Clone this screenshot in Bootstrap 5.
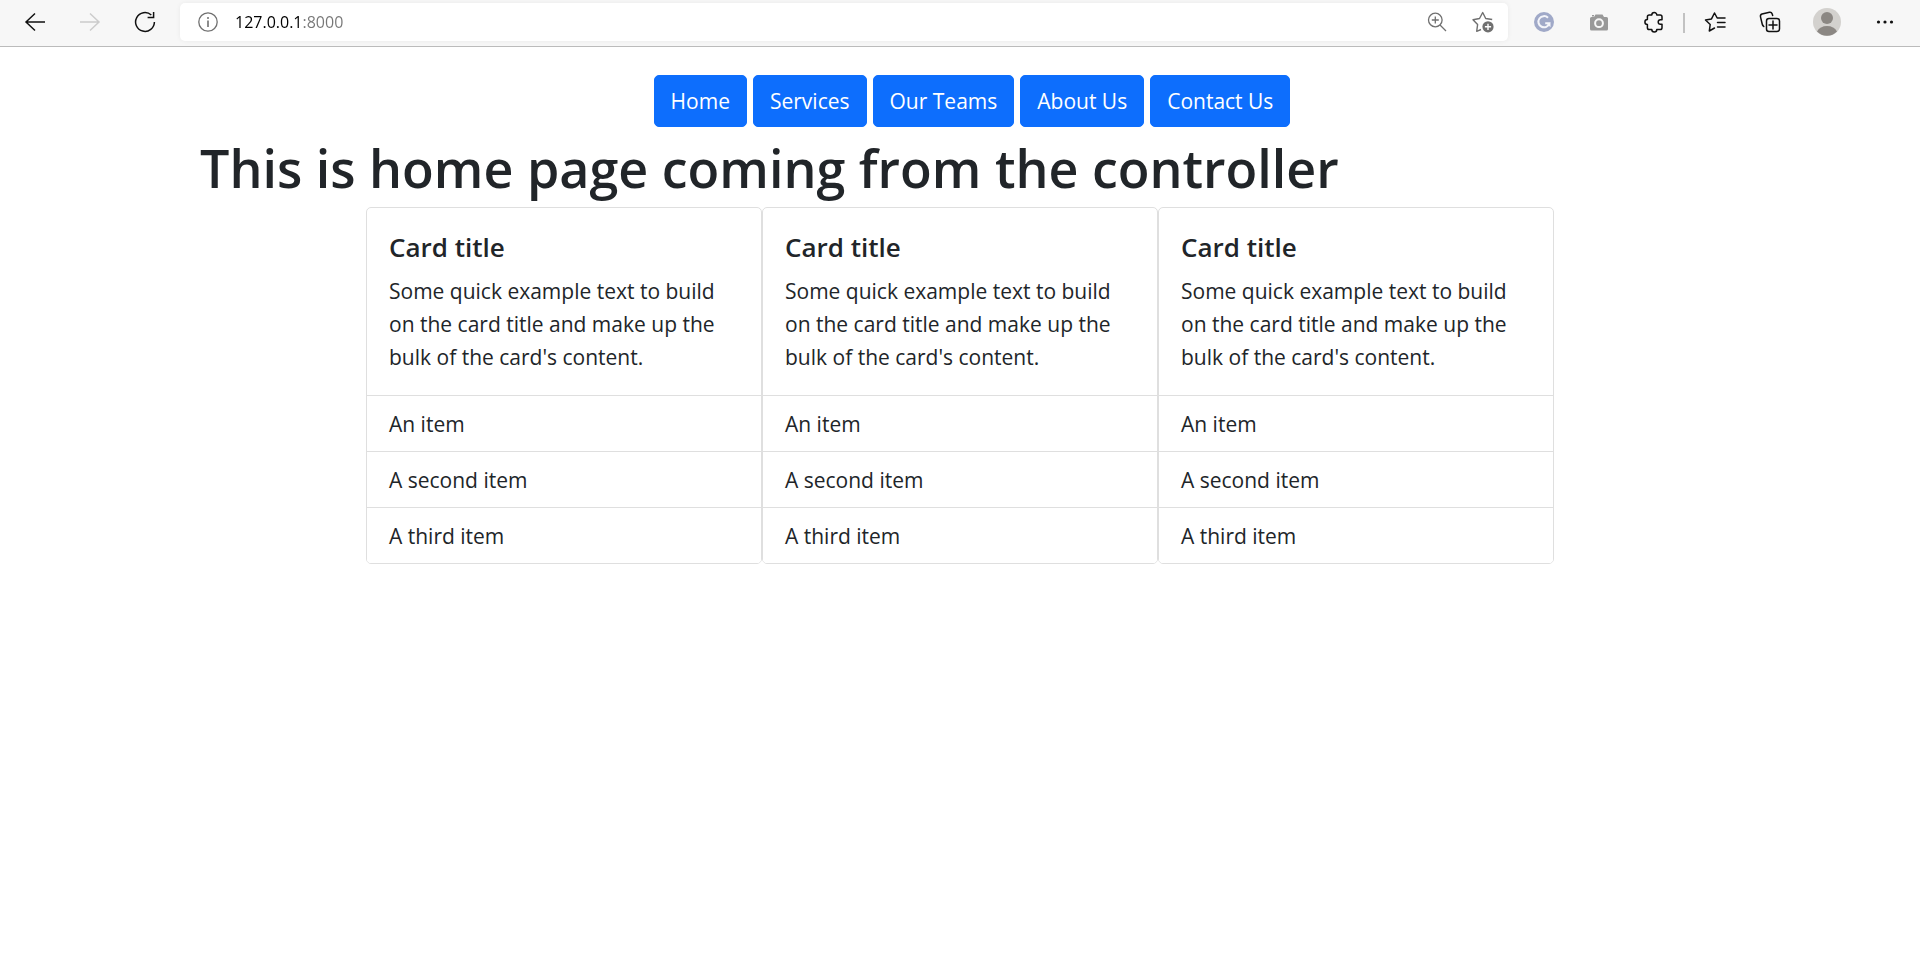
<!DOCTYPE html>
<html lang="en">
<head>
<meta charset="utf-8">
<meta name="viewport" content="width=device-width, initial-scale=1">
<title>Home</title>
<link href="https://cdn.jsdelivr.net/npm/bootstrap@5.3.0/dist/css/bootstrap.min.css" rel="stylesheet">
<style>
  body { font-family: "Open Sans", "Noto Sans", sans-serif; font-size: 21px; line-height: 33px; color: #212529; }

  /* Browser toolbar */
  .toolbar { height: 47px; padding: 0 8px 0 7px; background: #f7f7f7; border-bottom: 1px solid #bbb; }
  .tool { width: 55px; height: 44px; padding: 0; border: 0; background: none; color: #111; display: flex; align-items: center; justify-content: center; }
  .tool.wide { width: 60px; }
  .tool:disabled { color: #ccc; }
  .tool svg, .address svg { display: block; flex: none; }
  .address { height: 38px; margin: 3px 8px 0; padding: 0 2px 0 18px; background: #fff; border-radius: 5px; box-shadow: 0 0 5px #0000000f; color: #707070; }
  .address input { min-width: 0; height: 36px; margin-left: 17px; padding: 0; border: 0; outline: 0; font-size: 16px; line-height: 20px; color: #000;
    background: linear-gradient(90deg, #000 68px, #767676 68px) text; -webkit-background-clip: text; background-clip: text; -webkit-text-fill-color: transparent; }
  .address button { width: 46px; height: 36px; padding: 0; border: 0; background: none; color: #707070; display: flex; align-items: center; justify-content: center; }
  .divider { width: 2px; height: 20px; margin: 0 2px; background: #c2c2c2; }

  /* Page */
  .site-nav { gap: 6px; padding: 28px 0 0 24px; }
  .site-nav .btn { --bs-btn-font-size: 21px; --bs-btn-line-height: 34px; --bs-btn-padding-x: 16px; --bs-btn-padding-y: 8px; --bs-btn-border-radius: 5px; --bs-btn-bg: #0d6efd; }
  .page-body { max-width: 1520px; }
  .page-title { margin: 8px 0 6px; font-size: 52px; font-weight: 600; line-height: 66px; }
  .card { --bs-card-border-color: #dfdfdf; --bs-card-border-radius: 5px; --bs-card-inner-border-radius: 4px; width: 396px; }
  .card-body { padding: 23px 22px 21px; }
  .card-title { margin-bottom: 11px; font-size: 26px; font-weight: 600; line-height: 33px; }
  .card .list-group { --bs-list-group-border-color: #dfdfdf; --bs-list-group-color: #212529; }
  .card .list-group-item { padding: 12px 22px 10px; }
</style>
</head>
<body>
<header class="toolbar d-flex align-items-start">
  <button class="tool" type="button" aria-label="Back"><svg width="22" height="22" viewBox="0 0 22 22" fill="none" stroke="currentColor" stroke-width="1.5"><path d="M11 2.500 2 11l9 8.500M2 11h19"/></svg></button>
  <button class="tool" type="button" aria-label="Forward" disabled><svg width="22" height="22" viewBox="0 0 22 22" fill="none" stroke="currentColor" stroke-width="1.500"><path d="m11 2.500 9 8.500-9 8.500M20 11H1"/></svg></button>
  <button class="tool" type="button" aria-label="Refresh"><svg width="22" height="22" viewBox="0 0 22 22" fill="none" stroke="currentColor" stroke-width="1.500"><path d="M17.300 4A9.400 9.400 0 1 0 20.400 11M19.600 1v5.600h-6"/></svg></button>
  <form class="address flex-fill d-flex align-items-center">
    <svg width="20" height="20" viewBox="0 0 20 20" fill="none" stroke="currentColor" stroke-width="1.300"><circle cx="10" cy="10" r="9.200"/><path d="M10 8.500V15" stroke-width="1.600"/><circle cx="10" cy="6" r="1" fill="currentColor" stroke="none"/></svg>
    <input class="flex-fill" type="text" value="127.0.0.1:8000" aria-label="Address">
    <button type="button" aria-label="Zoom"><svg width="20" height="20" viewBox="0 0 20 20" fill="none" stroke="currentColor" stroke-width="1.300"><circle cx="8.300" cy="8" r="6.800"/><path d="m13 13 6 6M8.300 4.500v7M4.800 8h7"/></svg></button>
    <button type="button" aria-label="Add to favorites"><svg width="22" height="22" viewBox="0 0 22 22" fill="none" stroke="currentColor" stroke-width="1.400" stroke-linejoin="round"><path d="M9 18.500 4.700 20.300 5.600 13.600 1 8.700l6.500-1.200L10.700 1.500 13.700 7.500l6.500 1"/><circle cx="16" cy="15.800" r="5.600" fill="currentColor" stroke="none"/><path d="M16 12.700v6.200M12.900 15.800h6.200" stroke="#fff"/></svg></button>
  </form>
  <button class="tool" type="button" aria-label="Grammar extension"><svg width="20" height="20" viewBox="0 0 20 20"><circle cx="10" cy="10" r="10" fill="#a0a9c8"/><path d="M14 5.800A5.600 5.600 0 1 0 15.400 11.200H11.200" fill="none" stroke="#f4f5fa" stroke-width="2"/><path d="M12.500 11.500h4v3.800z" fill="#f4f5fa"/></svg></button>
  <button class="tool" type="button" aria-label="Screenshot extension"><svg width="20" height="20" viewBox="0 0 20 20"><path d="M1 6.500q0-1.500 1.500-1.500H5l1.500-2.500h7L15 5h2.500Q19 5 19 6.500V17q0 1.500-1.500 1.500h-15Q1 18.500 1 17z" fill="#999"/><path d="M3 3h2v1.500H3z" fill="#999"/><circle cx="10" cy="11.200" r="3.900" fill="#999" stroke="#f7f7f7" stroke-width="2"/></svg></button>
  <button class="tool" type="button" aria-label="Extensions"><svg width="20" height="22" viewBox="0 0 20 22" fill="none" stroke="currentColor" stroke-width="1.500" stroke-linejoin="round"><path d="M5.200 4H7.800a2.500 2.500 0 0 1 5 0h3.400q1.800 0 1.800 1.800V8.700h-1.500a2.300 2.300 0 0 0 0 4.600H18v3.400q0 1.800-1.800 1.800h-3.400a2.500 2.500 0 0 1-5 0H5.200q-1.800 0-1.800-1.800V13.500a2.500 2.500 0 0 1 0-5V5.800Q3.400 4 5.200 4z"/></svg></button>
  <span class="divider align-self-center"></span>
  <button class="tool" type="button" aria-label="Favorites"><svg width="22" height="22" viewBox="0 0 22 22" fill="none" stroke="currentColor" stroke-width="1.500" stroke-linejoin="round" stroke-linecap="round"><path d="m10.500 17-5.200 3 .9-6.500L1.500 9l6-1.100L10.500 2l2.700 5H21M13.500 11.500H21M13.500 16H21"/></svg></button>
  <button class="tool" type="button" aria-label="Collections"><svg width="22" height="22" viewBox="0 0 22 22" fill="none" stroke="currentColor" stroke-width="1.500" stroke-linecap="round"><rect x="7.500" y="7.500" width="13" height="13" rx="2.500"/><path d="M14 10v8M10 14h8M4.800 15.500Q3.500 14.500 3.200 13L1.500 5.800Q1 3.700 3 3L10.500 1.300q2-.3 2.600 1.400l.6 1.700"/></svg></button>
  <button class="tool wide" type="button" aria-label="Profile"><svg width="28" height="28" viewBox="0 0 28 28"><circle cx="14" cy="14" r="14" fill="#d3d1ce"/><circle cx="14" cy="10" r="6" fill="#8b8783"/><path d="M4 23.500Q7 18 14 18t10 5.500A14 14 0 0 1 4 23.500z" fill="#8b8783"/></svg></button>
  <button class="tool" type="button" aria-label="Settings and more"><svg width="20" height="20" viewBox="0 0 20 20" fill="currentColor"><circle cx="3.500" cy="10" r="1.600"/><circle cx="10" cy="10" r="1.600"/><circle cx="16.500" cy="10" r="1.600"/></svg></button>
</header>

<nav class="site-nav d-flex flex-wrap justify-content-center">
  <a class="btn btn-primary" href="#">Home</a>
  <a class="btn btn-primary" href="#">Services</a>
  <a class="btn btn-primary" href="#">Our Teams</a>
  <a class="btn btn-primary" href="#">About Us</a>
  <a class="btn btn-primary" href="#">Contact Us</a>
</nav>

<main class="page-body mx-auto">
  <h1 class="page-title">This is home page coming from the controller</h1>
  <div class="d-flex flex-wrap justify-content-center">
    <div class="card">
      <div class="card-body">
        <h5 class="card-title">Card title</h5>
        <p class="card-text">Some quick example text to build on the card title and make up the bulk of the card's content.</p>
      </div>
      <ul class="list-group list-group-flush">
        <li class="list-group-item">An item</li>
        <li class="list-group-item">A second item</li>
        <li class="list-group-item">A third item</li>
      </ul>
    </div>
    <div class="card">
      <div class="card-body">
        <h5 class="card-title">Card title</h5>
        <p class="card-text">Some quick example text to build on the card title and make up the bulk of the card's content.</p>
      </div>
      <ul class="list-group list-group-flush">
        <li class="list-group-item">An item</li>
        <li class="list-group-item">A second item</li>
        <li class="list-group-item">A third item</li>
      </ul>
    </div>
    <div class="card">
      <div class="card-body">
        <h5 class="card-title">Card title</h5>
        <p class="card-text">Some quick example text to build on the card title and make up the bulk of the card's content.</p>
      </div>
      <ul class="list-group list-group-flush">
        <li class="list-group-item">An item</li>
        <li class="list-group-item">A second item</li>
        <li class="list-group-item">A third item</li>
      </ul>
    </div>
  </div>
</main>
<script src="https://cdn.jsdelivr.net/npm/bootstrap@5.3.0/dist/js/bootstrap.bundle.min.js"></script>
</body>
</html>
